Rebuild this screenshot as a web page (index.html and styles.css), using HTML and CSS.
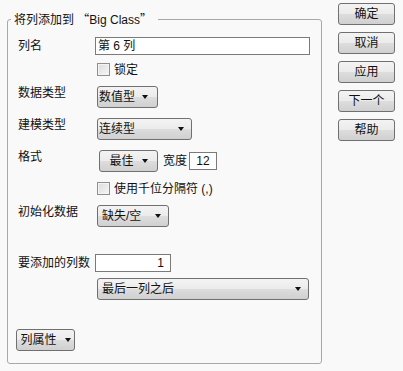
FILE: index.html
```html
<!DOCTYPE html>
<html lang="zh">
  <head>
    <meta charset="UTF-8" />
    <title>将列添加到 Big Class</title>
    <link rel="stylesheet" href="styles.css">
  </head>
  <body>
    <fieldset class="panel">
      <legend>将列添加到 <span class="q">“</span>Big Class<span class="q">”</span></legend>

      <div class="row row-input">
        <span class="label">列名</span>
        <span class="field name">第 6 列</span>
      </div>

      <div class="row row-check lock">
        <span class="check"></span>
        <span>锁定</span>
      </div>

      <div class="row row-drop r-type">
        <span class="label">数据类型</span>
        <span class="drop tight w-type">数值型<i></i></span>
      </div>

      <div class="row row-drop r-model">
        <span class="label">建模类型</span>
        <span class="drop tight w-model">连续型<i></i></span>
      </div>

      <div class="row row-drop r-format">
        <span class="label">格式</span>
        <span class="drop center w-format">最佳<i></i></span>
        <span class="width-label">宽度</span>
        <span class="field small">12</span>
      </div>

      <div class="row row-check sep">
        <span class="check"></span>
        <span>使用千位分隔符 (,)</span>
      </div>

      <div class="row row-drop r-init">
        <span class="label">初始化数据</span>
        <span class="drop w-init">缺失/空<i></i></span>
      </div>

      <div class="row row-input r-count">
        <span class="label">要添加的列数</span>
        <span class="field count">1</span>
      </div>

      <div class="row r-after">
        <span class="drop w-after">最后一列之后<i></i></span>
      </div>

      <div class="row r-props">
        <span class="drop center w-props">列属性<i></i></span>
      </div>
    </fieldset>

    <div class="actions">
      <button>确定</button>
      <button>取消</button>
      <button>应用</button>
      <button>下一个</button>
      <button>帮助</button>
    </div>
  </body>
</html>
```

FILE: styles.css
```css
body {
  margin: 0;
  width: 403px;
  height: 371px;
  background: #f9f9f9;
  font-family: "Liberation Sans", "Noto Sans CJK SC", sans-serif;
  font-size: 12px;
  line-height: 14px;
  color: #111;
  display: flex;
  align-items: flex-start;
  overflow: hidden;
}

.panel {
  box-sizing: border-box;
  margin: 12px 0 0 7px;
  padding: 0 0 0 10px;
  width: 315px;
  height: 352px;
  border: 1px solid #a8a8a8;
  border-radius: 3px;
  display: flex;
  flex-direction: column;
}

legend {
  margin-left: -7px;
  padding: 0 6px 0 3px;
  line-height: 14px;
}

.q {
  font-family: "Noto Sans CJK SC", sans-serif;
}

.row {
  display: flex;
  align-items: center;
}

.label {
  width: 77px;
  flex: none;
}

.row-drop {
  align-items: flex-start;
  height: 22px;

  .drop {
    margin-left: 2px;
  }
}

.row-input {
  margin-top: 10px;
  height: 18px;
}

.row-check {
  margin-top: 8px;
  height: 13px;
  padding-left: 79px;
  gap: 4px;
}

.r-type { margin-top: 10px; }
.r-model { margin-top: 10px; }
.r-format { margin-top: 10px; }
.sep { margin-top: 10px; }
.r-init { margin-top: 10px; }
.r-count { margin-top: 27px; }

.r-after {
  margin-top: 6px;
  padding-left: 79px;
}

.r-props {
  margin-top: 29px;
  margin-left: -2px;
}

.field {
  box-sizing: border-box;
  height: 18px;
  border: 1px solid #7a7a7a;
  background: #fff;
  padding: 0 6px 0 2px;
  display: flex;
  align-items: center;

  &.name { width: 215px; }
  &.small {
    width: 28px;
    justify-content: center;
    padding: 0;
  }
  &.count {
    width: 76px;
    justify-content: flex-end;
  }
}

.check {
  box-sizing: border-box;
  width: 13px;
  height: 13px;
  border: 1px solid #8e8f8f;
  background: linear-gradient(135deg, #dcdcdc, #f6f6f6);
  box-shadow: inset 0 0 0 1px #f4f4f4;
}

.drop {
  box-sizing: border-box;
  height: 22px;
  border: 1px solid #707070;
  border-radius: 3px;
  background: linear-gradient(#f3f3f3 0%, #ebebeb 50%, #dddddd 51%, #d0d0d0 100%);
  display: flex;
  align-items: center;
  justify-content: space-between;
  padding: 0 7px 0 4px;

  i {
    width: 0;
    height: 0;
    border-left: 3px solid transparent;
    border-right: 3px solid transparent;
    border-top: 4px solid #111;
  }

  &.tight { padding-left: 1px; }
  &.center {
    justify-content: center;
    gap: 8px;
    padding: 0;
  }
}

.w-type { width: 61px; padding-right: 9px; }
.w-model { width: 95px; }
.w-format { width: 59px; margin-left: 4px !important; }
.w-init { width: 72px; }
.w-after { width: 212px; }
.w-props { width: 59px; }

.width-label {
  margin: 0 2px 0 5px;
  line-height: 22px;
}

.r-format .field {
  margin-top: 2px;
}

.actions {
  margin: 3px 0 0 16px;
  display: flex;
  flex-direction: column;
  gap: 7px;

  button {
    box-sizing: border-box;
    width: 57px;
    height: 22px;
    padding: 0;
    border: 1px solid #707070;
    border-radius: 3px;
    background: linear-gradient(#f3f3f3 0%, #ebebeb 50%, #dddddd 51%, #d0d0d0 100%);
    font: inherit;
    color: #111;
  }
}
```
